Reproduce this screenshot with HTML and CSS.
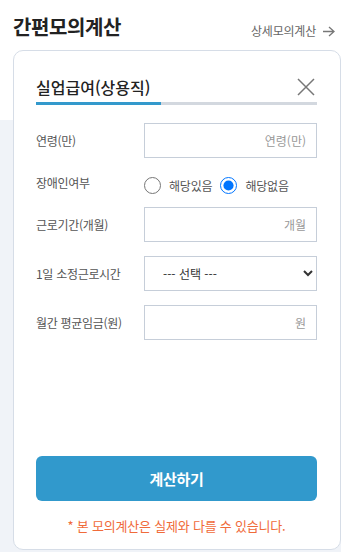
FILE: index.html
```html
<!DOCTYPE html>
<html lang="ko">
<head>
    <meta charset="UTF-8">
    <meta name="viewport" content="width=device-width, initial-scale=1.0">
    <title>간편모의계산</title>
    <link rel="stylesheet" href="styles.css">
</head>
<body>
    <div class="page">
        <header class="top">
            <h1 class="top-title">간편모의계산</h1>
            <a class="top-link" href="#">상세모의계산
                <svg width="13" height="11" viewBox="0 0 13 11" aria-hidden="true">
                    <path d="M1 5.5h11M7 1l5 4.5L7 10" fill="none" stroke="#777" stroke-width="1.3"/>
                </svg>
            </a>
        </header>

        <section class="card">
            <div class="card-head">
                <h2 class="card-title">실업급여(상용직)</h2>
                <button class="close" type="button" aria-label="닫기">
                    <svg width="18" height="18" viewBox="0 0 18 18">
                        <path d="M1 1l16 16M17 1L1 17" fill="none" stroke="#777" stroke-width="1.5"/>
                    </svg>
                </button>
            </div>
            <div class="progress"><span class="progress-fill" style="width: 44.5%"></span></div>

            <form class="form" onsubmit="return false">
                <label class="form-label" for="age">연령(만)</label>
                <input class="form-input" id="age" type="text" placeholder="연령(만)">

                <span class="form-label">장애인여부</span>
                <div class="radios">
                    <label class="radio"><input type="radio" name="disabled"> 해당있음</label>
                    <label class="radio"><input type="radio" name="disabled" checked> 해당없음</label>
                </div>

                <label class="form-label" for="period">근로기간(개월)</label>
                <input class="form-input" id="period" type="text" placeholder="개월">

                <label class="form-label" for="hours">1일 소정근로시간</label>
                <select class="form-select" id="hours">
                    <option>--- 선택 ---</option>
                    <option>4시간</option>
                    <option>8시간</option>
                </select>

                <label class="form-label" for="wage">월간 평균임금(원)</label>
                <input class="form-input" id="wage" type="text" placeholder="원">
            </form>

            <div class="card-foot">
                <button class="submit" type="button">계산하기</button>
                <p class="note">* 본 모의계산은 실제와 다를 수 있습니다.</p>
            </div>
        </section>
    </div>
</body>
</html>
```

FILE: styles.css
```css
body {
    margin: 0;
    font-family: "Noto Sans CJK KR", "Noto Sans", sans-serif;
    color: #333;
    background: #fff;
}

.page {
    width: 341px;
    height: 552px;
    overflow: hidden;
    background: linear-gradient(#fff 0, #fff 120px, #f0f3f8 120px);
}

.top {
    display: flex;
    justify-content: space-between;
    align-items: flex-start;
    height: 50px;
    box-sizing: border-box;
    padding: 13px 6px 0 13px;
}

.top-title {
    margin: 0;
    font-size: 20px;
    line-height: 28px;
    font-weight: 700;
    color: #222;
    letter-spacing: -0.4px;
}

.top-link {
    display: flex;
    align-items: center;
    gap: 6px;
    margin-top: 8px;
    font-size: 12px;
    line-height: 20px;
    color: #666;
    text-decoration: none;
    letter-spacing: -0.2px;
}

.card {
    display: flex;
    flex-direction: column;
    margin-left: 13px;
    width: 328px;
    height: 500px;
    box-sizing: border-box;
    padding: 0 23px 0 22px;
    background: #fff;
    border: 1px solid #d6dde7;
    border-radius: 10px;
}

.card-head {
    display: flex;
    justify-content: space-between;
    align-items: center;
    padding-top: 22px;
    height: 28px;
}

.card-title {
    margin: 0;
    font-size: 16px;
    line-height: 24px;
    font-weight: 500;
    color: #222;
}

.close {
    border: 0;
    padding: 0;
    margin-right: 2px;
    background: none;
    display: flex;
}

.progress {
    margin-top: 1px;
    height: 3px;
    background: #d3d8df;
}

.progress-fill {
    display: block;
    height: 100%;
    background: #3399cc;
}

.form {
    display: grid;
    grid-template-columns: 108px 1fr;
    grid-template-rows: 35px 21px 35px 35px 35px;
    row-gap: 14px;
    align-items: center;
    margin-top: 18px;
}

.form-label {
    font-size: 12px;
    color: #555;
    letter-spacing: -0.3px;
}

.form-input,
.form-select {
    height: 35px;
    box-sizing: border-box;
    border: 1px solid #c6ced9;
    border-radius: 0;
    background: #fff;
    font-family: inherit;
    font-size: 12px;
    color: #333;
    outline: none;
}

.form-input {
    text-align: right;
    padding: 0 10px;
    width: 100%;
}

.form-input::placeholder {
    color: #999;
}

.form-select {
    padding-left: 14px;
    width: 100%;
    color: #333;
}

.radios {
    display: flex;
    gap: 8px;
    margin-top: 5px;
}

.radio {
    display: flex;
    align-items: center;
    gap: 8px;
    font-size: 12px;
    color: #555;
    letter-spacing: -0.2px;
}

.radio input {
    width: 17px;
    height: 17px;
    margin: 0;
}

.card-foot {
    margin-top: auto;
    padding-bottom: 14px;
}

.submit {
    display: block;
    width: 100%;
    height: 45px;
    border: 0;
    border-radius: 6px;
    background: #3199cc;
    color: #fff;
    font-family: inherit;
    font-size: 15px;
    font-weight: 700;
    letter-spacing: -0.3px;
}

.note {
    margin: 16px 0 0;
    text-align: center;
    font-size: 13px;
    line-height: 18px;
    color: #f06b3a;
    letter-spacing: -0.2px;
}
```
